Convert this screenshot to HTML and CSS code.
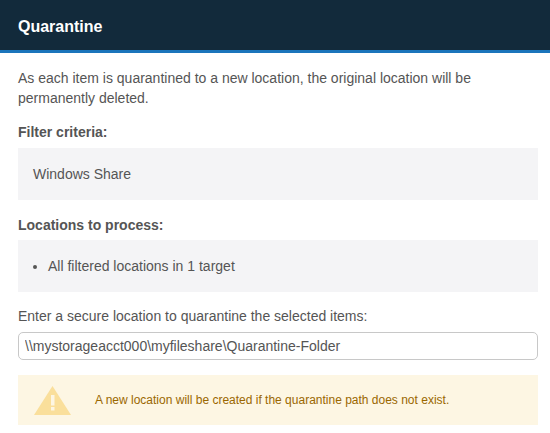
FILE: index.html
```html
<!DOCTYPE html>
<html lang="en">
<head>
    <meta charset="UTF-8">
    <meta name="viewport" content="width=device-width, initial-scale=1.0">
    <title>Quarantine</title>
    <link rel="stylesheet" href="styles.css">
</head>
<body>
    <div class="header">
        <h1>Quarantine</h1>
    </div>
    <div class="content">
        <p class="intro">As each item is quarantined to a new location, the original location will be permanently deleted.</p>
        <div class="label">Filter criteria:</div>
        <div class="panel">Windows Share</div>
        <div class="label">Locations to process:</div>
        <div class="panel panel-list">
            <ul>
                <li>All filtered locations in 1 target</li>
            </ul>
        </div>
        <label class="field-label" for="path">Enter a secure location to quarantine the selected items:</label>
        <input type="text" id="path" value="\\mystorageacct000\myfileshare\Quarantine-Folder">
        <div class="warning">
            <svg class="warning-icon" width="37" height="29" viewBox="0 0 37 29">
                <path d="M18.5 0 L37 29 L0 29 Z" fill="#fadf9b"/>
                <rect x="17" y="9" width="3.5" height="10.5" fill="#fdf6e3"/>
                <rect x="17" y="21" width="3.5" height="3.5" fill="#fdf6e3"/>
            </svg>
            <span>A new location will be created if the quarantine path does not exist.</span>
        </div>
    </div>
</body>
</html>
```
FILE: styles.css
```css
body { margin: 0; font-family: "Liberation Sans", Arial, sans-serif; font-size: 14px; color: #555; background: white; overflow: hidden; }
.header { height: 46px; background: #122a3b; border-bottom: 3px solid #1b75bb; display: flex; align-items: center; padding: 4px 18px 0; }
h1 { margin: 0; font-size: 16px; font-weight: bold; color: white; }
.content { padding: 0 12px 0 18px; }
.intro { margin: 15px 0 0; line-height: 20px; }
.label { margin-top: 14px; font-weight: bold; line-height: 20px; }
.panel { background: #f4f4f6; height: 52px; margin-top: 6px; padding: 0 15px; display: flex; align-items: center; }
.panel + .label { margin-top: 15px; }
.panel-list { margin-top: 5px; }
ul { margin: 0; padding: 0 0 0 15px; }
.field-label { display: block; margin-top: 14px; line-height: 20px; }
input { display: block; box-sizing: border-box; width: 100%; height: 28px; margin-top: 6px; padding: 0 6px; border: 1px solid #c8c8c8; border-radius: 5px; font-family: inherit; font-size: 14px; color: #555; }
.warning { background: #fdf6e3; height: 50px; margin-top: 15px; padding: 0 16px; display: flex; align-items: center; gap: 24px; font-size: 12px; color: #9a6700; }
.warning-icon { flex: none; }
```
